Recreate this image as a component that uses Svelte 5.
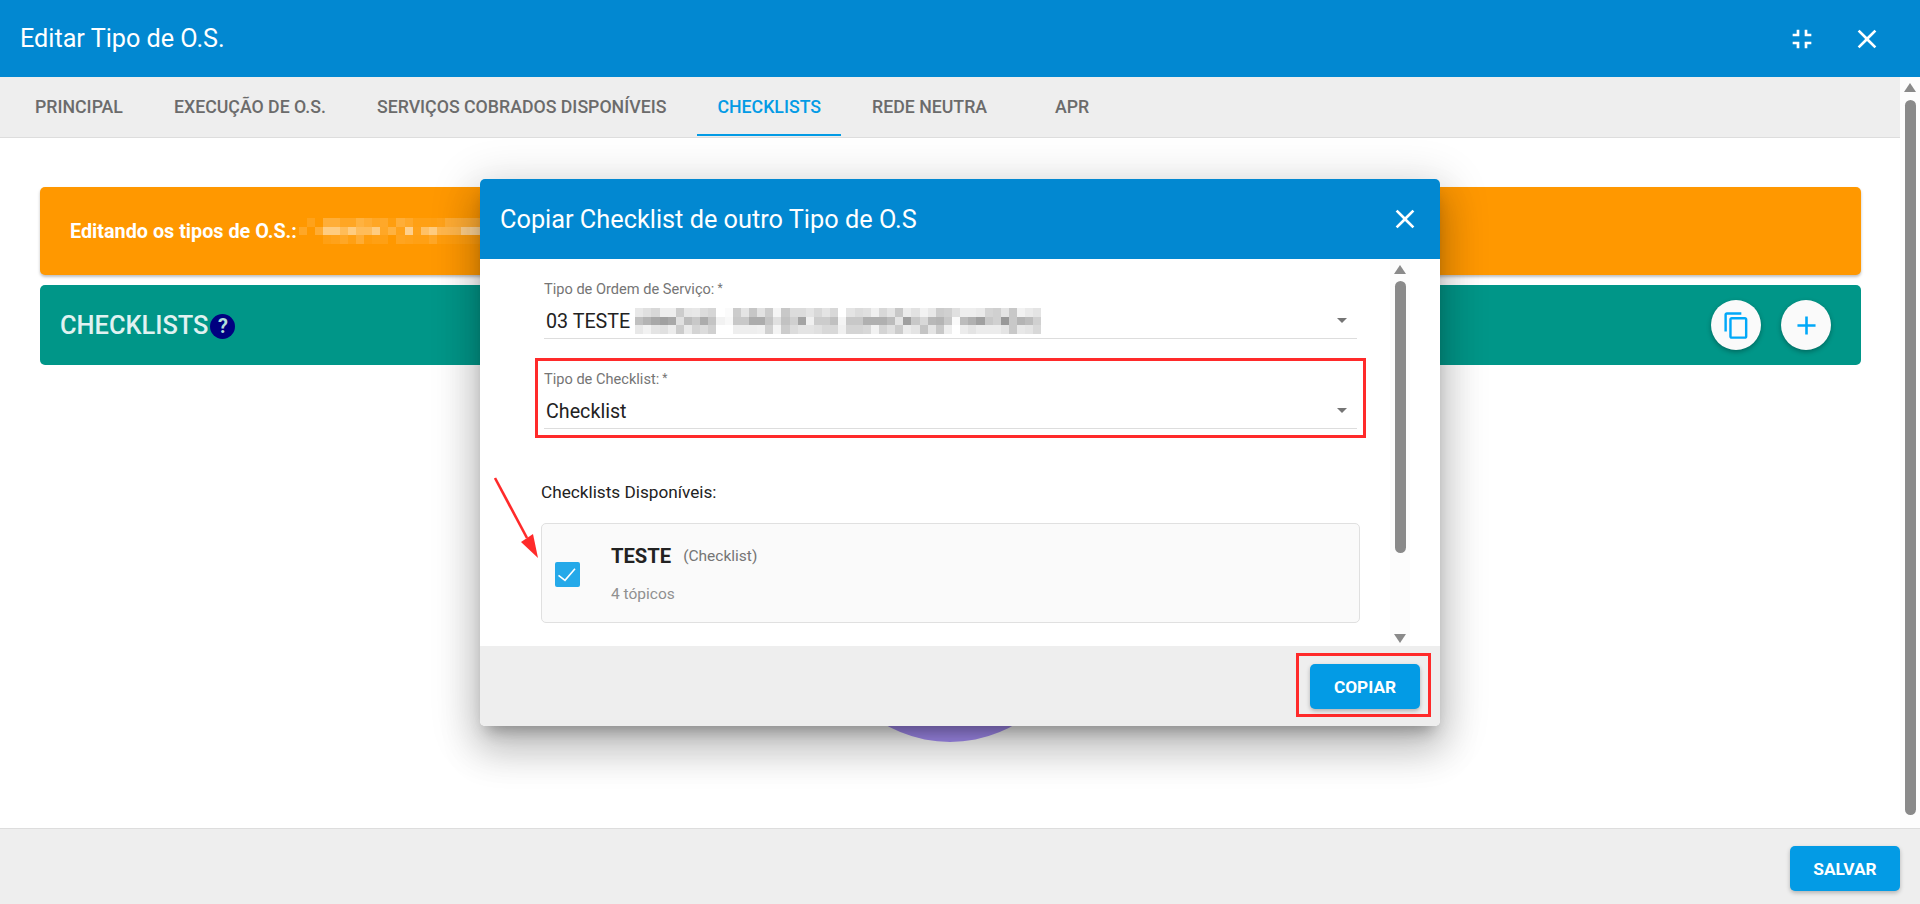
<script>
  const tabs = ["PRINCIPAL", "EXECUÇÃO DE O.S.", "SERVIÇOS COBRADOS DISPONÍVEIS", "CHECKLISTS", "REDE NEUTRA", "APR"];
  const active = "CHECKLISTS";

  // pixelated (censored) bits of the screenshot, one value per 8px cell
  const grayRows = [
    ["e8","e0","d8","ee","ee","cc","e6","e8","dc","d6","ff","fb","cc","e4","c6","e2","cc","f5","c8","dc","dc","e4","d8","e4","d8","ff","e4","dc","e0","f0","d8","e4","c8","ec","e2","f2","e8","cc","d0","e0","ee","ee","ea","d4","d0","e4","c8","f2","ea","e4"],
    ["c0","b4","a8","a0","a8","e0","bc","c8","ac","c4","f2","f8","c8","c8","ac","ac","c4","e0","c2","d0","a4","f0","cc","cc","c0","f4","c8","c8","b0","b0","b0","bc","e4","a0","c8","d8","b8","b4","c8","fa","bc","b0","a0","c8","d0","98","c8","b4","bc","d0"],
    ["e8","f2","e4","e0","ec","cc","ea","d4","dc","d0","ff","ff","ee","ee","ee","f0","d0","f4","cc","dc","e4","e4","e0","d8","d8","f0","d4","d4","d8","f2","d4","e0","cc","ec","e4","c4","e4","c8","ee","ff","ec","e4","ec","ec","ec","e4","c8","e8","e4","d8"]
  ];
  const orangeRows = [
    [0,.1,0,.22,.22,.14,.14,.25,.2,.14,.16,.06,.22,.16,.08,.08,.08,.1,.2,.2,.2,.2,.2],
    [.15,0,.2,.5,.5,.35,.5,.35,.35,.5,.15,.25,.1,.55,.1,.4,.5,.3,.3,.3,.55,.6,.6],
    [0,0,0,.08,.1,.15,.08,.2,.05,.08,.08,0,.12,.1,.08,.08,.15,.05,.05,.05,.05,.05,.05]
  ];
</script>

<div class="page">
  <header class="top">
    <h1>Editar Tipo de O.S.</h1>
    <div class="top-icons">
      <svg width="32" height="32" viewBox="0 0 24 24"><path d="M5 16h3v3h2v-5H5v2zm3-8H5v2h5V5H8v3zm6 11h2v-3h3v-2h-5v5zm2-11V5h-2v5h5V8h-3z" /></svg>
      <svg width="32" height="32" viewBox="0 0 24 24"><path d="M19 6.41L17.59 5 12 10.59 6.41 5 5 6.41 10.59 12 5 17.59 6.41 19 12 13.41 17.59 19 19 17.59 13.41 12z" /></svg>
    </div>
  </header>

  <div class="middle">
    <main>
      <nav>
        {#each tabs as t}
          <div class="tab" class:active={t === active}>{t}</div>
        {/each}
      </nav>
      <div class="content">
        <div class="banner">
          <b>Editando os tipos de O.S.:</b>
          <div class="mosaic orange">
            {#each orangeRows as row}
              <div class="mrow">
                {#each row as a}<i style="background: rgba(255,255,255,{a})"></i>{/each}
              </div>
            {/each}
          </div>
        </div>
        <div class="section">
          <span class="section-title">CHECKLISTS</span>
          <span class="help">?</span>
          <div class="fabs">
            <div class="fab">
              <svg width="29" height="29" viewBox="0 0 24 24"><path d="M16 1H4c-1.1 0-2 .9-2 2v14h2V3h12V1zm3 4H8c-1.1 0-2 .9-2 2v14c0 1.1.9 2 2 2h11c1.1 0 2-.9 2-2V7c0-1.1-.9-2-2-2zm0 16H8V7h11v14z" /></svg>
            </div>
            <div class="fab">
              <svg width="31" height="31" viewBox="0 0 24 24"><path d="M19 13h-6v6h-2v-6H5v-2h6V5h2v6h6v2z" /></svg>
            </div>
          </div>
        </div>
        <div class="blob"></div>
      </div>
    </main>
    <div class="scrollbar">
      <span class="arrow up"></span>
      <span class="thumb"></span>
    </div>
  </div>

  <footer class="bottom">
    <button class="primary">SALVAR</button>
  </footer>

  <div class="dialog">
    <div class="dialog-head">
      <h2>Copiar Checklist de outro Tipo de O.S</h2>
      <svg width="32" height="32" viewBox="0 0 24 24"><path d="M19 6.41L17.59 5 12 10.59 6.41 5 5 6.41 10.59 12 5 17.59 6.41 19 12 13.41 17.59 19 19 17.59 13.41 12z" /></svg>
    </div>
    <div class="dialog-body">
      <div class="form">
        <div class="field first">
          <div class="label">Tipo de Ordem de Serviço:<span class="req">*</span></div>
          <div class="value">
            <span>03 TESTE</span>
            <div class="mosaic gray">
              {#each grayRows as row}
                <div class="mrow">
                  {#each row as c}<i style="background: #{c}{c}{c}"></i>{/each}
                </div>
              {/each}
            </div>
            <span class="caret"></span>
          </div>
        </div>
        <div class="redbox">
          <div class="field">
            <div class="label">Tipo de Checklist:<span class="req">*</span></div>
            <div class="value">
              <span>Checklist</span>
              <span class="caret"></span>
            </div>
          </div>
        </div>
        <div class="avail">Checklists Disponíveis:</div>
        <div class="card">
          <span class="check">
            <svg width="25" height="25" viewBox="0 0 25 25"><path d="M3.5 13.3L10 18.3 20 6.8" fill="none" stroke="#fff" stroke-width="1.6" /></svg>
          </span>
          <div class="card-text">
            <div class="card-title"><b>TESTE</b><span>(Checklist)</span></div>
            <div class="card-sub">4 tópicos</div>
          </div>
        </div>
      </div>
      <div class="scrollbar inner">
        <span class="arrow up"></span>
        <span class="thumb"></span>
        <span class="arrow down"></span>
      </div>
    </div>
    <div class="dialog-foot">
      <div class="redbox-btn">
        <button class="primary">COPIAR</button>
      </div>
    </div>
    <svg class="pointer" width="60" height="90" viewBox="0 0 60 90">
      <path d="M5 2L37 62" fill="none" stroke="#ff2a2a" stroke-width="2.6" />
      <path d="M48 82L31 66 43 58z" fill="#ff2a2a" />
    </svg>
  </div>
</div>

<style>
  :global(body) {
    margin: 0;
    font-family: Roboto, sans-serif;
    background: #fff;
    overflow: hidden;
  }

  .page {
    position: relative;
    height: 904px;
    display: flex;
    flex-direction: column;
    overflow: hidden;
  }

  .top {
    height: 77px;
    flex: none;
    background: #0288d1;
    color: #fff;
    display: flex;
    align-items: center;
    justify-content: space-between;
    padding: 0 37px 0 20px;
  }

  h1 {
    margin: 0;
    font-size: 25.2px;
    font-weight: 400;
  }

  .top-icons {
    display: flex;
    gap: 33px;
  }

  svg {
    display: block;
    fill: currentColor;
  }

  .middle {
    flex: 1;
    min-height: 0;
    display: flex;
  }

  main {
    flex: 1;
    min-width: 0;
  }

  nav {
    height: 61px;
    box-sizing: border-box;
    background: #eee;
    border-bottom: 1px solid #ddd;
    display: flex;
    gap: 11px;
    padding-left: 15px;
  }

  .tab {
    padding: 0 20px;
    min-width: 108px;
    text-align: center;
    height: 59px;
    box-sizing: border-box;
    line-height: 60px;
    font-size: 17.73px;
    font-weight: 500;
    color: #6b6b6b;
  }

  .tab.active {
    color: #039be5;
    border-bottom: 2px solid #039be5;
  }

  .content {
    padding: 49px 39px 0 40px;
  }

  .banner {
    height: 88px;
    background: #ff9800;
    border-radius: 5px;
    box-shadow: 0 2px 3px rgba(0, 0, 0, 0.25);
    display: flex;
    align-items: center;
    padding-left: 30px;
    color: #fff;
    font-size: 19.8px;
    margin-bottom: 10px;
  }

  .mosaic {
    display: flex;
    flex-direction: column;
  }

  .mosaic.orange {
    margin-left: 2px;
  }

  .mosaic.gray {
    margin-left: 5px;
  }

  .mrow {
    display: flex;
    height: 8.5px;
  }

  .mrow i {
    display: block;
    width: 8.14px;
    flex: none;
  }

  .section {
    height: 80px;
    background: #009688;
    border-radius: 5px;
    display: flex;
    align-items: center;
    padding: 0 30px 0 20px;
  }

  .section-title {
    font-size: 25.4px;
    font-weight: 500;
    color: #e0f2f1;
  }

  .help {
    width: 25px;
    height: 25px;
    margin: 2px 0 0 2px;
    border-radius: 50%;
    background: #000080;
    color: #b2dfdb;
    font-size: 20px;
    font-weight: 700;
    text-align: center;
    line-height: 25px;
  }

  .fabs {
    margin-left: auto;
    display: flex;
    gap: 20px;
  }

  .fab {
    width: 50px;
    height: 50px;
    border-radius: 50%;
    background: #fafafa;
    color: #00a8f8;
    display: flex;
    align-items: center;
    justify-content: center;
    box-shadow: 0 2px 5px rgba(0, 0, 0, 0.3);
  }

  .blob {
    width: 260px;
    height: 260px;
    margin: 117px 0 0 780px;
    border-radius: 50%;
    background: #a890f8;
  }

  .scrollbar {
    width: 20px;
    flex: none;
    display: flex;
    flex-direction: column;
    align-items: center;
    background: #fdfdfd;
    position: relative;
  }

  .arrow {
    width: 0;
    height: 0;
    border-left: 6.5px solid transparent;
    border-right: 6.5px solid transparent;
  }

  .arrow.up {
    border-bottom: 9px solid #8a8a8a;
    margin-top: 6px;
  }

  .arrow.down {
    border-top: 9px solid #8a8a8a;
    margin-top: auto;
    margin-bottom: 3px;
  }

  .thumb {
    width: 11px;
    height: 715px;
    margin-top: 8px;
    border-radius: 6px;
    background: #8a8a8a;
  }

  .bottom {
    height: 76px;
    box-sizing: border-box;
    flex: none;
    background: #eee;
    border-top: 1px solid #ddd;
    display: flex;
    justify-content: flex-end;
    padding: 17px 20px 0 0;
  }

  .primary {
    width: 110px;
    height: 45px;
    border: none;
    border-radius: 5px;
    background: #039be5;
    color: #fff;
    font: 700 17.3px Roboto, sans-serif;
    box-shadow: 0 2px 4px rgba(0, 0, 0, 0.25);
  }

  .dialog {
    position: absolute;
    left: 480px;
    top: 179px;
    width: 960px;
    height: 547px;
    display: flex;
    flex-direction: column;
    background: #fff;
    border-radius: 5px;
    box-shadow: 0 11px 15px -7px rgba(0, 0, 0, 0.3), 0 24px 38px 3px rgba(0, 0, 0, 0.16), 0 9px 46px 8px rgba(0, 0, 0, 0.14);
  }

  .dialog-head {
    height: 80px;
    flex: none;
    background: #0288d1;
    border-radius: 5px 5px 0 0;
    color: #fff;
    display: flex;
    align-items: center;
    justify-content: space-between;
    padding: 0 19px 0 20px;
  }

  h2 {
    margin: 0;
    font-size: 25.3px;
    font-weight: 400;
  }

  .dialog-body {
    flex: 1;
    min-height: 0;
    display: flex;
    padding-left: 55px;
  }

  .form {
    width: 831px;
    padding-top: 19px;
    flex: none;
  }

  .field {
    height: 61px;
    box-sizing: border-box;
    border-bottom: 1px solid #ddd;
  }

  .field.first {
    margin: 0 9px 19px;
  }

  .label {
    height: 20px;
    line-height: 20px;
    font-size: 14.6px;
    color: #757575;
  }

  .req {
    margin-left: 3px;
    font-size: 12px;
    vertical-align: 2px;
  }

  .value {
    display: flex;
    align-items: center;
    height: 30px;
    margin-top: 8px;
    padding-left: 2px;
    font-size: 19.7px;
    color: #222;
    position: relative;
  }

  .caret {
    position: absolute;
    right: 10px;
    top: 12px;
    width: 0;
    height: 0;
    border-left: 5px solid transparent;
    border-right: 5px solid transparent;
    border-top: 5px solid #757575;
  }

  .redbox {
    height: 80px;
    box-sizing: border-box;
    border: 3px solid #ff2a2a;
    padding: 7px 6px 0;
  }

  .avail {
    margin: 42px 0 19px 6px;
    font-size: 17.2px;
    line-height: 24px;
    color: #222;
  }

  .card {
    margin-left: 6px;
    width: 819px;
    height: 100px;
    box-sizing: border-box;
    border: 1px solid #e0e0e0;
    border-radius: 5px;
    background: #fafafa;
    display: flex;
    align-items: center;
    padding-left: 13px;
  }

  .check {
    width: 25px;
    height: 25px;
    margin-top: 2px;
    border-radius: 2px;
    background: #25a9e9;
    flex: none;
  }

  .card-text {
    margin: 2px 0 0 31px;
  }

  .card-title {
    display: flex;
    align-items: center;
    height: 24px;
  }

  .card-title b {
    font-size: 20.2px;
    font-weight: 700;
    color: #222;
  }

  .card-title span {
    margin-left: 12px;
    font-size: 15.5px;
    color: #757575;
  }

  .card-sub {
    margin-top: 16px;
    font-size: 15.5px;
    line-height: 20px;
    color: #909090;
  }

  .scrollbar.inner {
    margin-left: 24px;
    background: #fcfcfc;
  }

  .scrollbar.inner .thumb {
    height: 272px;
    margin-top: 7px;
  }

  .dialog-foot {
    height: 80px;
    flex: none;
    background: #eee;
    border-radius: 0 0 5px 5px;
    display: flex;
    justify-content: flex-end;
    padding: 7px 9px 0 0;
    box-sizing: border-box;
  }

  .redbox-btn {
    width: 135px;
    height: 64px;
    box-sizing: border-box;
    border: 3px solid #ff2a2a;
    padding: 8px 0 0 11px;
  }

  .pointer {
    position: absolute;
    left: 10px;
    top: 297px;
  }
</style>
